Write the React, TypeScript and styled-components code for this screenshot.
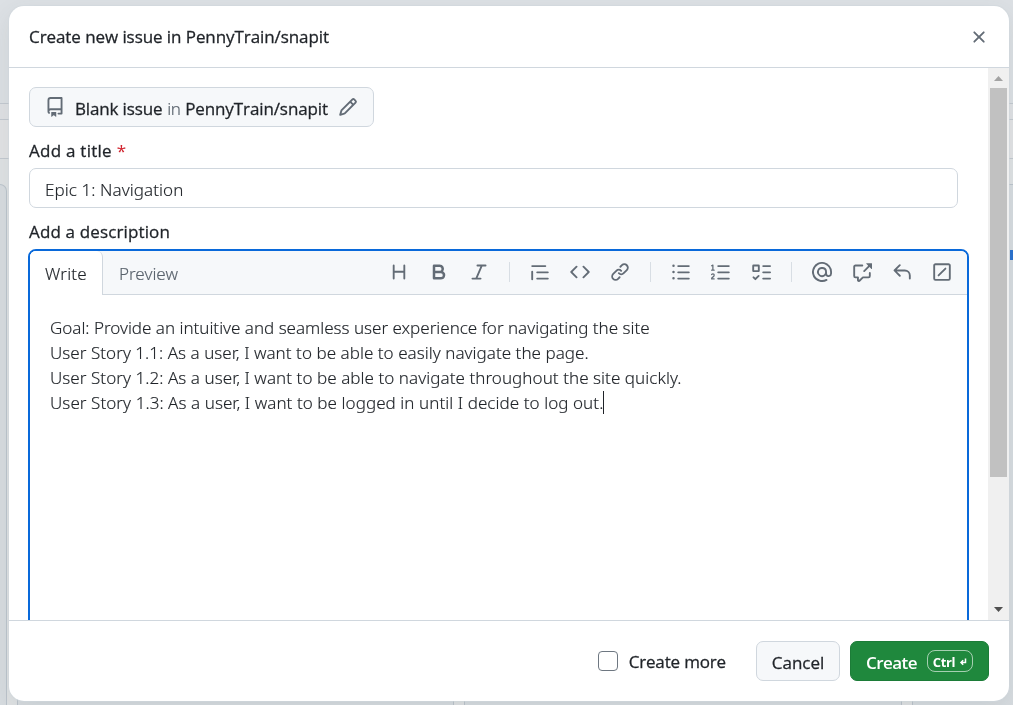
import React from 'react';
import styled, { createGlobalStyle } from 'styled-components';

const GlobalStyle = createGlobalStyle`
  * { box-sizing: border-box; }
  body { margin: 0; overflow: hidden; background: #dfe2e5; }
  button { font: inherit; padding: 0; cursor: pointer; }
`;

const icons = {
  heading: 'M3.75 2a.75.75 0 0 1 .75.75V7h7V2.75a.75.75 0 0 1 1.5 0v10.5a.75.75 0 0 1-1.5 0V8.5h-7v4.75a.75.75 0 0 1-1.5 0V2.75A.75.75 0 0 1 3.75 2Z',
  bold: 'M4 2h4.5a3.501 3.501 0 0 1 2.852 5.53A3.499 3.499 0 0 1 9.5 14H4a1 1 0 0 1-1-1V3a1 1 0 0 1 1-1Zm1 7v3h4.5a1.5 1.5 0 0 0 0-3Zm3.5-2a1.5 1.5 0 0 0 0-3H5v3Z',
  italic: 'M6 2.75A.75.75 0 0 1 6.75 2h6.5a.75.75 0 0 1 0 1.5h-2.505l-3.858 9H9.25a.75.75 0 0 1 0 1.5h-6.5a.75.75 0 0 1 0-1.5h2.505l3.858-9H6.75A.75.75 0 0 1 6 2.75Z',
  quote: 'M1.75 2.5h10.5a.75.75 0 0 1 0 1.5H1.75a.75.75 0 0 1 0-1.5Zm4 5h8.5a.75.75 0 0 1 0 1.5h-8.5a.75.75 0 0 1 0-1.5Zm0 5h8.5a.75.75 0 0 1 0 1.5h-8.5a.75.75 0 0 1 0-1.5ZM2.5 7.75v6a.75.75 0 0 1-1.5 0v-6a.75.75 0 0 1 1.5 0Z',
  code: 'm11.28 3.22 4.25 4.25a.75.75 0 0 1 0 1.06l-4.25 4.25a.749.749 0 0 1-1.275-.326.749.749 0 0 1 .215-.734L13.94 8l-3.72-3.72a.749.749 0 0 1 .326-1.275.749.749 0 0 1 .734.215Zm-6.56 0a.751.751 0 0 1 1.042.018.751.751 0 0 1 .018 1.042L2.06 8l3.72 3.72a.749.749 0 0 1-.326 1.275.749.749 0 0 1-.734-.215L.47 8.53a.75.75 0 0 1 0-1.06Z',
  link: 'm7.775 3.275 1.25-1.25a3.5 3.5 0 1 1 4.95 4.95l-2.5 2.5a3.5 3.5 0 0 1-4.95 0 .751.751 0 0 1 .018-1.042.751.751 0 0 1 1.042-.018 1.998 1.998 0 0 0 2.83 0l2.5-2.5a2.002 2.002 0 0 0-2.83-2.83l-1.25 1.25a.751.751 0 0 1-1.042-.018.751.751 0 0 1-.018-1.042Zm-4.69 9.64a1.998 1.998 0 0 0 2.83 0l1.25-1.25a.751.751 0 0 1 1.042.018.751.751 0 0 1 .018 1.042l-1.25 1.25a3.5 3.5 0 1 1-4.95-4.95l2.5-2.5a3.5 3.5 0 0 1 4.95 0 .751.751 0 0 1-.018 1.042.751.751 0 0 1-1.042.018 1.998 1.998 0 0 0-2.83 0l-2.5 2.5a1.998 1.998 0 0 0 0 2.83Z',
  bullets: 'M5.75 2.5h8.5a.75.75 0 0 1 0 1.5h-8.5a.75.75 0 0 1 0-1.5Zm0 5h8.5a.75.75 0 0 1 0 1.5h-8.5a.75.75 0 0 1 0-1.5Zm0 5h8.5a.75.75 0 0 1 0 1.5h-8.5a.75.75 0 0 1 0-1.5ZM2 14a1 1 0 1 1 0-2 1 1 0 0 1 0 2Zm1-6a1 1 0 1 1-2 0 1 1 0 0 1 2 0ZM2 4a1 1 0 1 1 0-2 1 1 0 0 1 0 2Z',
  numbers: 'M5 3.25a.75.75 0 0 1 .75-.75h8.5a.75.75 0 0 1 0 1.5h-8.5A.75.75 0 0 1 5 3.25Zm0 5a.75.75 0 0 1 .75-.75h8.5a.75.75 0 0 1 0 1.5h-8.5A.75.75 0 0 1 5 8.25Zm0 5a.75.75 0 0 1 .75-.75h8.5a.75.75 0 0 1 0 1.5h-8.5a.75.75 0 0 1-.75-.75ZM.924 10.32a.5.5 0 0 1-.851-.525l.001-.001.001-.002.002-.004.007-.011c.097-.144.215-.273.348-.384.228-.19.588-.392 1.068-.392.468 0 .858.181 1.126.484.259.294.377.673.377 1.038 0 .987-.686 1.495-1.156 1.845l-.047.035c-.303.225-.522.4-.654.597h1.357a.5.5 0 0 1 0 1H.5a.5.5 0 0 1-.5-.5c0-1.005.692-1.52 1.167-1.875l.035-.025c.531-.396.8-.625.8-1.078a.57.57 0 0 0-.128-.376C1.806 10.068 1.695 10 1.5 10a.658.658 0 0 0-.429.163.835.835 0 0 0-.144.153ZM2.003 2.5V6h.503a.5.5 0 0 1 0 1H.5a.5.5 0 0 1 0-1h.503V3.308l-.28.14a.5.5 0 0 1-.446-.895l1.003-.5a.5.5 0 0 1 .723.447Z',
  tasks: 'M2 2h4a1 1 0 0 1 1 1v4a1 1 0 0 1-1 1H2a1 1 0 0 1-1-1V3a1 1 0 0 1 1-1Zm4.655 8.595a.75.75 0 0 1 0 1.06L4.03 14.28a.75.75 0 0 1-1.06 0l-1.5-1.5a.749.749 0 0 1 .326-1.275.749.749 0 0 1 .734.215l.97.97 2.095-2.095a.75.75 0 0 1 1.06 0ZM9.75 2.5h5.5a.75.75 0 0 1 0 1.5h-5.5a.75.75 0 0 1 0-1.5Zm0 5h5.5a.75.75 0 0 1 0 1.5h-5.5a.75.75 0 0 1 0-1.5Zm0 5h5.5a.75.75 0 0 1 0 1.5h-5.5a.75.75 0 0 1 0-1.5Zm-7.25-9v3h3v-3Z',
  mention: 'M4.75 2.37a6.501 6.501 0 0 0 6.5 11.26.75.75 0 0 1 .75 1.298A7.999 7.999 0 0 1 .989 4.148 8 8 0 0 1 16 7.75v1.5a2.75 2.75 0 0 1-5.072 1.475 3.999 3.999 0 0 1-6.65-4.19A4 4 0 0 1 12 8v1.25a1.25 1.25 0 0 0 2.5 0V7.867a6.5 6.5 0 0 0-9.75-5.496ZM10.5 8a2.5 2.5 0 1 0-5 0 2.5 2.5 0 0 0 5 0Z',
  reference: 'M2.75 3.5a.25.25 0 0 0-.25.25v7.5c0 .138.112.25.25.25h2a.75.75 0 0 1 .75.75v2.19l2.72-2.72a.749.749 0 0 1 .53-.22h4.5a.25.25 0 0 0 .25-.25v-2.5a.75.75 0 0 1 1.5 0v2.5A1.75 1.75 0 0 1 13.25 13H9.06l-2.573 2.573A1.458 1.458 0 0 1 4 14.543V13H2.75A1.75 1.75 0 0 1 1 11.25v-7.5C1 2.784 1.784 2 2.75 2h5.5a.75.75 0 0 1 0 1.5ZM16 1.25v4.146a.25.25 0 0 1-.427.177L14.03 4.03l-3.75 3.75a.749.749 0 0 1-1.275-.326.749.749 0 0 1 .215-.734l3.75-3.75-1.543-1.543A.25.25 0 0 1 11.604 1h4.146a.25.25 0 0 1 .25.25Z',
  reply: 'M6.78 1.97a.75.75 0 0 1 0 1.06L3.81 6h6.44A4.75 4.75 0 0 1 15 10.75v2.5a.75.75 0 0 1-1.5 0v-2.5a3.25 3.25 0 0 0-3.25-3.25H3.81l2.97 2.97a.749.749 0 0 1-.326 1.275.749.749 0 0 1-.734-.215L1.47 7.28a.75.75 0 0 1 0-1.06l4.25-4.25a.75.75 0 0 1 1.06 0Z',
  slash: 'M2.75 1h10.5c.966 0 1.75.784 1.75 1.75v10.5A1.75 1.75 0 0 1 13.25 15H2.75A1.75 1.75 0 0 1 1 13.25V2.75C1 1.784 1.784 1 2.75 1Zm10.5 1.5H2.75a.25.25 0 0 0-.25.25v10.5c0 .138.112.25.25.25h10.5a.25.25 0 0 0 .25-.25V2.75a.25.25 0 0 0-.25-.25Zm-1.97 3.28-5.5 5.5a.75.75 0 0 1-1.06-1.06l5.5-5.5a.75.75 0 0 1 1.06 1.06Z',
  repo: 'M2 2.5A2.5 2.5 0 0 1 4.5 0h8.75a.75.75 0 0 1 .75.75v12.5a.75.75 0 0 1-.75.75h-2.5a.75.75 0 0 1 0-1.5h1.75v-2h-8a1 1 0 0 0-.714 1.7.75.75 0 1 1-1.072 1.05A2.495 2.495 0 0 1 2 11.5Zm10.5-1h-8a1 1 0 0 0-1 1v6.708A2.486 2.486 0 0 1 4.5 9h8ZM5 12.25a.25.25 0 0 1 .25-.25h3.5a.25.25 0 0 1 .25.25v3.25a.25.25 0 0 1-.4.2l-1.45-1.087a.249.249 0 0 0-.3 0L5.4 15.7a.25.25 0 0 1-.4-.2Z',
  pencil: 'M11.013 1.427a1.75 1.75 0 0 1 2.474 0l1.086 1.086a1.75 1.75 0 0 1 0 2.474l-8.61 8.61c-.21.21-.47.364-.756.445l-3.251.93a.75.75 0 0 1-.927-.928l.929-3.25c.081-.286.235-.547.445-.758l8.61-8.61Zm.176 4.823L9.75 4.81l-6.286 6.287a.253.253 0 0 0-.064.108l-.558 1.953 1.953-.558a.253.253 0 0 0 .108-.064Zm1.238-3.763a.25.25 0 0 0-.354 0L10.811 3.75l1.439 1.44 1.263-1.263a.25.25 0 0 0 0-.354Z',
  close: 'M3.72 3.72a.75.75 0 0 1 1.06 0L8 6.94l3.22-3.22a.749.749 0 0 1 1.275.326.749.749 0 0 1-.215.734L9.06 8l3.22 3.22a.749.749 0 0 1-.326 1.275.749.749 0 0 1-.734-.215L8 9.06l-3.22 3.22a.751.751 0 0 1-1.042-.018.751.751 0 0 1-.018-1.042L6.94 8 3.72 4.78a.75.75 0 0 1 0-1.06Z',
};
type IconName = keyof typeof icons;

const IconSvg = styled.svg`
  display: block;
  flex: none;
  fill: #636c76;
`;
const Icon = ({ name }: { name: IconName }) => (
  <IconSvg width="20" height="20" viewBox="0 0 16 16"><path d={icons[name]} /></IconSvg>
);

/* Project board behind the dialog */
const Backdrop = styled.div`
  height: 705px;
  display: flex;
  flex-direction: column;
  overflow: hidden;
`;
const Band = styled.div<{ $h: number; $bg: string }>`
  flex: none;
  height: ${p => p.$h}px;
  background: ${p => p.$bg};
  border-bottom: 1px solid #c3c9d0;
`;
const Board = styled.div`
  flex: 1;
  display: flex;
  gap: 10px;
  margin-bottom: -10px;
  padding-top: 25px;
  background: #dfe2e4;
`;
const BoardColumn = styled.div<{ $w: number }>`
  flex: none;
  width: ${p => p.$w}px;
  background: #d7dce0;
  border: 1px solid #bcc4cc;
  border-radius: 0 7px 0 0;
  border-left-width: ${p => (p.$w < 10 ? 0 : 1)}px;
`;
const Marker = styled.div`
  width: 10px;
  height: 10px;
  margin: 65px 0 0 97px;
  background: #2a72cf;
`;

const Dialog = styled.div`
  position: fixed;
  left: 9px;
  top: 6px;
  width: 1000px;
  height: 695px;
  display: flex;
  flex-direction: column;
  overflow: hidden;
  background: #fff;
  border-radius: 15px;
  box-shadow: 0 0 0 1px rgba(208, 215, 222, 0.5), 0 8px 24px rgba(66, 74, 83, 0.1);
  font-family: 'Noto Sans', sans-serif;
  font-size: 17px;
  color: #1f2328;
`;
const Header = styled.header`
  flex: none;
  height: 62px;
  padding: 0 20px;
  display: flex;
  align-items: center;
  justify-content: space-between;
  border-bottom: 1px solid #d0d7de;
`;
const Strong = styled.span<{ $ls?: number }>`
  font-family: 'Open Sans', sans-serif;
  font-weight: 400;
  -webkit-text-stroke: 0.3px currentColor;
  letter-spacing: ${p => p.$ls ?? 0}px;
  white-space: nowrap;
`;
const Light = styled.span<{ $ls?: number; $muted?: boolean }>`
  font-weight: 300;
  -webkit-text-stroke: 0.15px currentColor;
  letter-spacing: ${p => p.$ls ?? 0}px;
  color: ${p => (p.$muted ? '#59626c' : '#1f2328')};
  white-space: nowrap;
`;
const IconButton = styled.button`
  border: 0;
  background: none;
`;

const Middle = styled.div`
  flex: 1;
  min-height: 0;
  display: flex;
`;
const Form = styled.div`
  flex: 1;
  padding: 19px 19px 0;
  overflow: hidden;
`;
const TemplateButton = styled.button`
  width: 345px;
  height: 40px;
  margin-left: 1px;
  padding: 3px 15px 0 15px;
  display: flex;
  align-items: center;
  color: inherit;
  background: #f6f8fa;
  border: 1px solid #d0d7de;
  border-radius: 7px;
  ${IconSvg} { margin-top: -4px; }
`;
const TemplateText = styled.span`
  width: 253px;
  margin: 0 10px;
  display: flex;
  justify-content: space-between;
`;
const Label = styled.div<{ $top: number }>`
  height: 24px;
  margin: ${p => p.$top}px 1px 0;
  line-height: 25px;
`;
const Required = styled.span`
  margin-left: 5px;
  color: #d1242f;
`;
const TitleField = styled.div`
  width: 929px;
  height: 40px;
  margin: 6px 0 0 1px;
  padding: 3px 15px 0;
  line-height: 36px;
  border: 1px solid #d0d7de;
  border-radius: 7px;
`;
const Editor = styled.div`
  width: 941px;
  height: 460px;
  margin-top: 6px;
  border: 2px solid #0969da;
  border-radius: 8px;
  overflow: hidden;
`;
const TabBar = styled.div`
  height: 44px;
  display: flex;
  background: #f6f8fa;
`;
const Tab = styled.div<{ $active?: boolean; $w: number }>`
  width: ${p => p.$w}px;
  padding-left: ${p => (p.$active ? 15 : 16)}px;
  line-height: 45px;
  background: ${p => (p.$active ? '#fff' : 'transparent')};
  border-right: ${p => (p.$active ? '1px solid #d0d7de' : '0')};
  border-bottom: ${p => (p.$active ? '0' : '1px solid #d0d7de')};
  border-top-right-radius: ${p => (p.$active ? 6 : 0)}px;
`;
const Tools = styled.div`
  flex: 1;
  padding: 0 5px 2px 0;
  display: flex;
  align-items: center;
  justify-content: flex-end;
  border-bottom: 1px solid #d0d7de;
`;
const Tool = styled.button`
  width: 40px;
  height: 40px;
  display: flex;
  align-items: center;
  justify-content: center;
  border: 0;
  background: none;
`;
const Separator = styled.div`
  width: 1px;
  height: 20px;
  margin: 0 10px;
  background: #d8dee4;
`;
const TextArea = styled.div`
  padding: 20px 20px;
`;
const TextLine = styled.div`
  height: 25px;
  display: flex;
  align-items: center;
`;
const Caret = styled.span`
  width: 1px;
  height: 23px;
  background: #1f2328;
`;

const Scrollbar = styled.div`
  width: 21px;
  display: flex;
  flex-direction: column;
  align-items: center;
  background: #f0f0f0;
`;
const Arrow = styled.svg`
  flex: none;
  width: 21px;
  height: 20px;
`;
const Thumb = styled.div`
  width: 17px;
  height: 389px;
  margin-bottom: auto;
  background: #c1c1c1;
`;

const Footer = styled.footer`
  flex: none;
  height: 81px;
  padding: 0 20px;
  display: flex;
  align-items: center;
  justify-content: flex-end;
  border-top: 1px solid #d0d7de;
`;
const Checkbox = styled.span`
  width: 20px;
  height: 20px;
  margin-right: 11px;
  border: 1px solid #6e7781;
  border-radius: 4px;
`;
const Cancel = styled.button`
  width: 84px;
  height: 40px;
  margin: 0 10px 0 30px;
  padding-top: 2px;
  color: inherit;
  background: #f6f8fa;
  border: 1px solid #d0d7de;
  border-radius: 7px;
`;
const Create = styled.button`
  width: 139px;
  height: 40px;
  padding: 0 15px;
  display: flex;
  align-items: center;
  justify-content: space-between;
  color: #fff;
  background: #1f883d;
  border: 1px solid #1c7c38;
  border-radius: 7px;
`;
const CreateText = styled.span`
  padding-top: 2px;
  font-family: 'Open Sans', sans-serif;
  font-size: 17px;
  font-weight: 600;
  letter-spacing: -0.55px;
`;
const Keys = styled.kbd`
  width: 46px;
  height: 22px;
  padding-top: 1px;
  display: flex;
  align-items: center;
  justify-content: center;
  gap: 4px;
  border: 1px solid rgba(255, 255, 255, 0.6);
  border-radius: 8px;
  font-family: 'Open Sans', sans-serif;
  font-size: 13px;
  font-weight: 700;
  letter-spacing: -0.35px;
`;

const lines: [string, number][] = [
  ['Goal: Provide an intuitive and seamless user experience for navigating the site', -0.01],
  ['User Story 1.1: As a user, I want to be able to easily navigate the page.', 0.04],
  ['User Story 1.2: As a user, I want to be able to navigate throughout the site quickly.', 0.055],
  ['User Story 1.3: As a user, I want to be logged in until I decide to log out.', 0.065],
];
const toolGroups: IconName[][] = [
  ['heading', 'bold', 'italic'],
  ['quote', 'code', 'link'],
  ['bullets', 'numbers', 'tasks'],
  ['mention', 'reference', 'reply', 'slash'],
];

export default function App() {
  return (
    <>
      <GlobalStyle />
      <Backdrop>
        <Band $h={104} $bg="#dce0e4" />
        <Band $h={16} $bg="#dfe1e4" />
        <Band $h={39} $bg="#e2e3e5" />
        <Board>
          <BoardColumn $w={7} />
          <BoardColumn $w={437} />
          <BoardColumn $w={438} />
          <BoardColumn $w={437}><Marker /></BoardColumn>
        </Board>
      </Backdrop>
      <Dialog>
        <Header>
          <Strong $ls={-0.076}>Create new issue in PennyTrain/snapit</Strong>
          <IconButton aria-label="Close"><Icon name="close" /></IconButton>
        </Header>
        <Middle>
          <Form>
            <TemplateButton>
              <Icon name="repo" />
              <TemplateText>
                <Strong $ls={-0.15}>Blank issue</Strong>
                <Light $muted $ls={-0.5}>in</Light>
                <Strong $ls={-0.1}>PennyTrain/snapit</Strong>
              </TemplateText>
              <Icon name="pencil" />
            </TemplateButton>
            <Label $top={11}><Strong $ls={0.25}>Add a title</Strong><Required>*</Required></Label>
            <TitleField><Light $ls={0.08}>Epic 1: Navigation</Light></TitleField>
            <Label $top={11}><Strong $ls={0.14}>Add a description</Strong></Label>
            <Editor>
              <TabBar>
                <Tab $active $w={73}><Light $ls={0.15}>Write</Light></Tab>
                <Tab $w={100}><Light $muted>Preview</Light></Tab>
                <Tools>
                  {toolGroups.map((group, i) => (
                    <React.Fragment key={i}>
                      {i > 0 && <Separator />}
                      {group.map(name => <Tool key={name} aria-label={name}><Icon name={name} /></Tool>)}
                    </React.Fragment>
                  ))}
                </Tools>
              </TabBar>
              <TextArea>
                {lines.map(([text, ls], i) => (
                  <TextLine key={text}>
                    <Light $ls={ls}>{text}</Light>
                    {i === lines.length - 1 && <Caret />}
                  </TextLine>
                ))}
              </TextArea>
            </Editor>
          </Form>
          <Scrollbar>
            <Arrow viewBox="0 0 21 20"><path d="M6 13h9L10.500 8Z" fill="#a3a3a3" /></Arrow>
            <Thumb />
            <Arrow viewBox="0 0 21 20"><path d="M6 7h9L10.500 12Z" fill="#505050" /></Arrow>
          </Scrollbar>
        </Middle>
        <Footer>
          <Checkbox />
          <Strong $ls={-0.16}>Create more</Strong>
          <Cancel><Strong $ls={-0.05}>Cancel</Strong></Cancel>
          <Create>
            <CreateText>Create</CreateText>
            <Keys>
              Ctrl
              <svg width="8" height="9" viewBox="0 0 8 9" fill="none" stroke="#fff" strokeWidth="1.500">
                <path d="M6.500 1.500v4H2M4.200 3.300L2 5.500L4.200 7.700" />
              </svg>
            </Keys>
          </Create>
        </Footer>
      </Dialog>
    </>
  );
}
